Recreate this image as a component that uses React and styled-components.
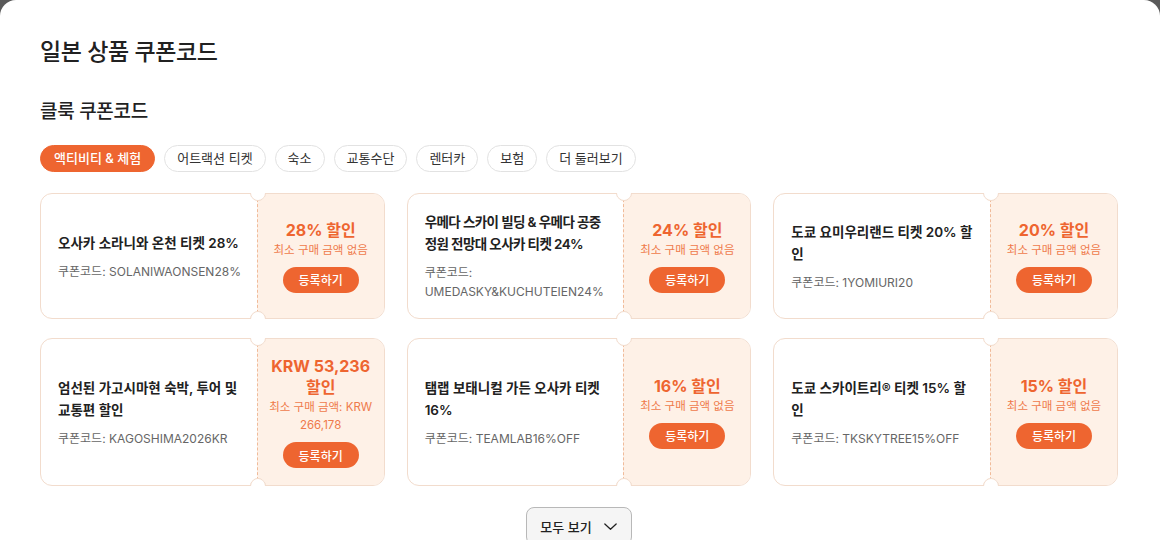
import React from 'react';
import styled, { createGlobalStyle } from 'styled-components';

const GlobalStyle = createGlobalStyle`
  html, body {
    margin: 0;
    padding: 0;
    background: #5a5a5a;
  }
  body {
    font-family: Inter, "Noto Sans CJK KR", "Noto Sans", sans-serif;
    color: #212121;
  }
`

const ORANGE = '#ee6530';
const LINE = '#f2dccd';
const PEACH = '#fef1e7';

const Modal = styled.div`
  background: #fff;
  border-radius: 16px 16px 0 0;
  height: 540px;
  overflow: hidden;
  padding: 36px 42px 0 40px;
  box-sizing: border-box;
`

const Title = styled.h1`
  margin: 0;
  font-size: 23px;
  font-weight: 500;
  line-height: 32px;
  letter-spacing: -0.4px;
`

const SubTitle = styled.h2`
  margin: 30px 0 0;
  font-size: 19px;
  font-weight: 500;
  line-height: 28px;
  letter-spacing: -0.3px;
`

const Chips = styled.div`
  display: flex;
  gap: 9px;
  margin-top: 19px;
`

const Chip = styled.button`
  box-sizing: border-box;
  height: 27px;
  padding: 0 ${p => (p.$active ? 13 : 12)}px;
  border-radius: 14px;
  border: 1px solid ${p => (p.$active ? ORANGE : '#e2e2e2')};
  background: ${p => (p.$active ? ORANGE : '#fff')};
  color: ${p => (p.$active ? '#fff' : '#333')};
  font-family: inherit;
  font-size: 13px;
  font-weight: ${p => (p.$active ? 500 : 400)};
  line-height: 25px;
  cursor: pointer;
`

const Grid = styled.div`
  display: grid;
  grid-template-columns: repeat(3, 1fr);
  column-gap: 22px;
  row-gap: 19px;
  margin-top: 21px;
`

const Card = styled.div`
  position: relative;
  display: flex;
  border: 1px solid ${LINE};
  border-radius: 12px;
`

const Left = styled.div`
  flex: 1;
  min-width: 0;
  padding: 17px 12px 17px 17px;
  display: flex;
  flex-direction: column;
  justify-content: center;
  gap: 8px;
`

const CardTitle = styled.div`
  font-size: 13.5px;
  font-weight: 600;
  line-height: 22px;
  color: #212121;
  letter-spacing: ${p => (p.$tight ? '-0.6px' : 'normal')};
`

const Code = styled.div`
  font-size: 12px;
  line-height: 19px;
  color: #666;
`

const Right = styled.div`
  position: relative;
  width: 127px;
  flex: none;
  box-sizing: border-box;
  background: ${PEACH};
  border-left: 1px dashed #f0bb9a;
  border-radius: 0 11px 11px 0;
  padding: 17px 8px;
  display: flex;
  flex-direction: column;
  align-items: center;
  justify-content: center;
  text-align: center;
`

const Notch = styled.span`
  position: absolute;
  left: -8px;
  ${p => (p.$bottom ? 'bottom: -9px;' : 'top: -9px;')}
  width: 14px;
  height: 14px;
  border-radius: 50%;
  background: #fff;
  border: 1px solid transparent;
  border-left-color: ${LINE};
  border-${p => (p.$bottom ? 'top' : 'bottom')}-color: ${LINE};
  transform: rotate(${p => (p.$bottom ? '45deg' : '-45deg')});
`

const Discount = styled.div`
  font-size: 16px;
  font-weight: 700;
  line-height: 21px;
  color: ${ORANGE};
`

const MinSpend = styled.div`
  font-size: 11.5px;
  line-height: 18px;
  color: #ef7a4b;
`

const Register = styled.button`
  margin-top: 8px;
  height: 26px;
  padding: 0 16px;
  border: none;
  border-radius: 13px;
  background: ${ORANGE};
  color: #fff;
  font-family: inherit;
  font-size: 12px;
  font-weight: 500;
  cursor: pointer;
`

const Footer = styled.div`
  display: flex;
  justify-content: center;
  margin-top: 21px;
`

const MoreButton = styled.button`
  display: flex;
  align-items: center;
  gap: 10px;
  height: 38px;
  padding: 0 12px 0 13px;
  border: 1px solid #b8b8b8;
  border-radius: 8px;
  background: #f5f5f5;
  color: #212121;
  font-family: inherit;
  font-size: 13px;
  font-weight: 500;
  cursor: pointer;
`

const chips = ['액티비티 & 체험', '어트랙션 티켓', '숙소', '교통수단', '렌터카', '보험', '더 둘러보기'];

const coupons = [
  { title: '오사카 소라니와 온천 티켓 28%', code: 'SOLANIWAONSEN28%', off: '28% 할인', min: '최소 구매 금액 없음' },
  { title: '우메다 스카이 빌딩 & 우메다 공중 정원 전망대 오사카 티켓 24%', code: 'UMEDASKY&KUCHUTEIEN24%', off: '24% 할인', min: '최소 구매 금액 없음', tight: true },
  { title: '도쿄 요미우리랜드 티켓 20% 할인', code: '1YOMIURI20', off: '20% 할인', min: '최소 구매 금액 없음' },
  { title: '엄선된 가고시마현 숙박, 투어 및 교통편 할인', code: 'KAGOSHIMA2026KR', off: 'KRW 53,236 할인', min: '최소 구매 금액: KRW 266,178' },
  { title: '탬랩 보태니컬 가든 오사카 티켓 16%', code: 'TEAMLAB16%OFF', off: '16% 할인', min: '최소 구매 금액 없음' },
  { title: '도쿄 스카이트리® 티켓 15% 할인', code: 'TKSKYTREE15%OFF', off: '15% 할인', min: '최소 구매 금액 없음' },
];

const Chevron = () => (
  <svg width="17" height="17" viewBox="0 0 24 24" fill="none" stroke="#212121" strokeWidth="1.8" strokeLinecap="round" strokeLinejoin="round">
    <path d="M4 8.5l8 7.5 8-7.5" />
  </svg>
);

export default function App() {
  return (
    <>
      <GlobalStyle />
      <Modal>
        <Title>일본 상품 쿠폰코드</Title>
        <SubTitle>클룩 쿠폰코드</SubTitle>
        <Chips>
          {chips.map((c, i) => (
            <Chip key={c} $active={i === 0}>{c}</Chip>
          ))}
        </Chips>
        <Grid>
          {coupons.map(c => (
            <Card key={c.code}>
              <Left>
                <CardTitle $tight={c.tight}>{c.title}</CardTitle>
                <Code>쿠폰코드: {c.code}</Code>
              </Left>
              <Right>
                <Notch />
                <Notch $bottom />
                <Discount>{c.off}</Discount>
                <MinSpend>{c.min}</MinSpend>
                <Register>등록하기</Register>
              </Right>
            </Card>
          ))}
        </Grid>
        <Footer>
          <MoreButton>
            모두 보기
            <Chevron />
          </MoreButton>
        </Footer>
      </Modal>
    </>
  );
}
